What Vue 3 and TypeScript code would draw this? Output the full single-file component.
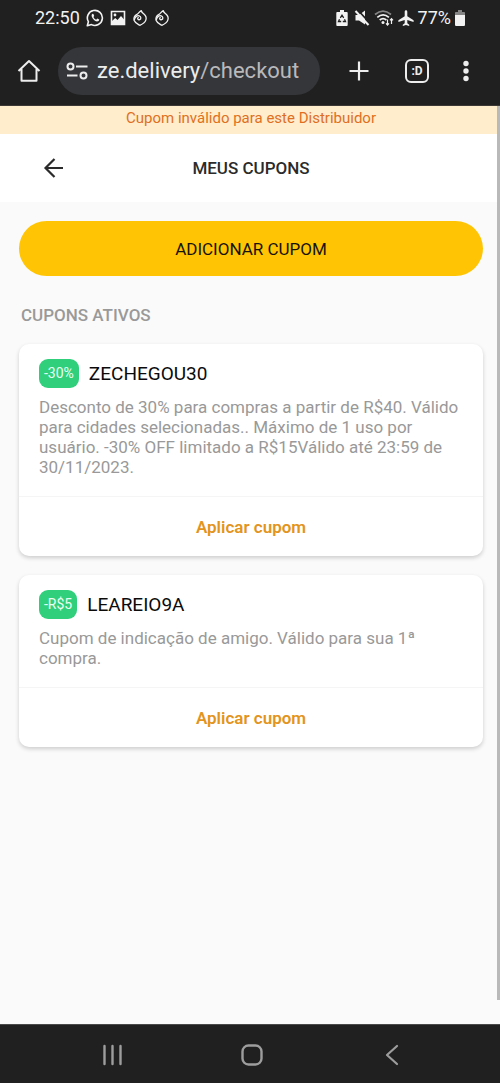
<script setup lang="ts">
interface Coupon {
  code: string
  badge: string
  description: string
}

const coupons: Coupon[] = [
  {
    code: 'ZECHEGOU30',
    badge: '-30%',
    description:
      'Desconto de 30% para compras a partir de R$40. Válido para cidades selecionadas.. Máximo de 1 uso por usuário. -30% OFF limitado a R$15Válido até 23:59 de 30/11/2023.',
  },
  {
    code: 'LEAREIO9A',
    badge: '-R$5',
    description: 'Cupom de indicação de amigo. Válido para sua 1ª compra.',
  },
]
</script>

<template>
  <div class="screen">
    <header class="chrome">
      <div class="status">
        <div class="status-group">
          <span class="status-text">22:50</span>
          <svg class="i18" viewBox="0 0 18 18" fill="none" stroke="#f2f2f2" aria-hidden="true">
            <path d="M1.3 16.7l1.1-4A7.5 7.5 0 1 1 5.5 15.600z" stroke-width="1.6" stroke-linejoin="round" />
            <path d="M6.600 4.800c-1.500.8-1.200 2.800.2 4.700 1.600 2.100 3.500 3.400 5.200 2.800.9-.3 1.300-1.100 1.200-1.700l-2-1-1 1.100c-1.200-.4-2.300-1.500-2.800-2.700l.8-1-.8-2.100z" fill="#f2f2f2" stroke="none" />
          </svg>
          <svg class="i16" viewBox="0 0 16 16" aria-hidden="true">
            <path d="M1.500 1.500h13v13h-13z" fill="#202020" stroke="#f2f2f2" stroke-width="1.600" />
            <circle cx="5" cy="5" r="1.400" fill="#f2f2f2" />
            <path d="M2 11l3.200-3 2.300 2 3.500-4 3.500 4v5H2z" fill="#f2f2f2" />
          </svg>
          <svg v-for="n in 2" :key="n" class="flame" viewBox="0 0 16 18" fill="none" stroke="#f2f2f2" stroke-width="1.300" stroke-linecap="round" stroke-linejoin="round" aria-hidden="true">
            <path d="M9.300 1.600C6.800 3 7 4.300 5 5.300 2.300 6.700 1.500 9 2.200 11.500c.9 2.600 3.400 3.600 5.600 4.800 2.500-1.100 5.300-2.800 6.100-5.400.8-2.500-.4-4.500-2-5.900C10.500 3.800 9.400 3.200 9.300 1.600z" />
            <path d="M2.300 10.800C3 7.500 5.300 6.300 7.200 6.800c2 .6 2.200 3.300.4 3.900-1.500.4-2.600-1.300-1.400-2.200" />
          </svg>
        </div>
        <div class="status-group right">
          <svg class="battery" viewBox="0 0 12 16" aria-hidden="true">
            <path d="M4 0h4v2h2.500c.8 0 1.200.4 1.200 1.200v11.600c0 .8-.4 1.200-1.200 1.200h-9C.7 16 .3 15.600.3 14.800V3.200C.3 2.400.7 2 1.500 2H4z" fill="#f2f2f2" />
            <path d="M4.300 7.800L6 5.200l1.700 2.600M8.500 9.300l1 2.200H6.800M3.500 9.300l-1 2.200h2.700" fill="none" stroke="#202020" stroke-width="1.300" />
          </svg>
          <svg class="i16" viewBox="0 0 16 16" aria-hidden="true">
            <path d="M1.500 5H5l6-4.500v14L5 10.500H1.500z" fill="#f2f2f2" />
            <path d="M4.200.5l12 13" stroke="#202020" stroke-width="1.800" />
            <path d="M1.500 1l13 14" stroke="#f2f2f2" stroke-width="2" />
          </svg>
          <svg class="wifi" viewBox="0 0 20 16" fill="none" stroke="#f2f2f2" aria-hidden="true">
            <path d="M1 4.500c5-4.300 11-4.300 16 0" stroke="#858585" stroke-width="1.700" />
            <path d="M3.300 7.300c3.600-3 8-3 11.600 0M5.700 10c2-1.700 4.600-1.700 6.700 0" stroke-width="1.700" />
            <circle cx="9" cy="12.500" r="1.500" fill="#f2f2f2" stroke="none" />
            <path d="M13.500 9.500v5.500M12 13.300l1.500 1.700 1.500-1.700M17.500 14V8.700M16 10.400l1.500-1.700 1.500 1.700" stroke-width="1.200" />
          </svg>
          <svg class="i16" viewBox="0 0 16 16" aria-hidden="true">
            <path d="M8 .3c.8 0 1.300.7 1.300 1.500v4.500l6.300 4v1.600L9.300 10v3.300l1.900 1.400v1.200L8 15l-3.200.9v-1.200l1.900-1.400V10L.4 11.900v-1.600l6.300-4V1.800C6.700 1 7.200.3 8 .3z" fill="#f2f2f2" />
          </svg>
          <span class="status-text">77%</span>
          <svg class="charge" viewBox="0 0 10 16" aria-hidden="true">
            <path d="M0 5V3c0-.7.4-1 1-1h2V0h4v2h2c.6 0 1 .3 1 1v2z" fill="#858585" />
            <path d="M0 5h10v9.500c0 1-.5 1.500-1.500 1.500h-7C.5 16 0 15.500 0 14.500z" fill="#f2f2f2" />
          </svg>
        </div>
      </div>

      <div class="toolbar">
        <button class="icon-btn" type="button" aria-label="Página inicial">
          <svg class="i24" viewBox="0 0 24 24" fill="none" stroke="#ededed" stroke-width="2" aria-hidden="true">
            <path d="M1.500 12L12 2l10.500 10M4.500 10v11.800h15V10" stroke-linejoin="round" />
          </svg>
        </button>
        <div class="address">
          <svg class="i24" viewBox="0 0 24 24" fill="none" stroke="#ededed" stroke-width="2" aria-hidden="true">
            <circle cx="5.500" cy="7.500" r="3" />
            <circle cx="18.500" cy="16.500" r="3" />
            <path d="M11 7.500h11.500M2 16.500h10.500" />
          </svg>
          <a class="url" href="#">ze.delivery<span>/checkout</span></a>
        </div>
        <div class="actions">
          <button class="icon-btn new-tab" type="button" aria-label="Nova guia">
            <svg class="i24" viewBox="0 0 24 24" stroke="#ededed" stroke-width="2.200" aria-hidden="true">
              <path d="M12 2.500v19M2.500 12h19" />
            </svg>
          </button>
          <button class="icon-btn tabs" type="button" aria-label="Guias abertas">:D</button>
          <button class="icon-btn" type="button" aria-label="Mais opções">
            <svg class="i24" viewBox="0 0 24 24" fill="#ededed" aria-hidden="true">
              <circle cx="12" cy="4.500" r="2.700" />
              <circle cx="12" cy="12" r="2.700" />
              <circle cx="12" cy="19.500" r="2.700" />
            </svg>
          </button>
        </div>
      </div>
    </header>

    <main class="page">
      <p class="notice" role="alert">Cupom inválido para este Distribuidor</p>
      <div class="title-bar">
        <button class="back" type="button" aria-label="Voltar">
          <svg class="i24" viewBox="0 0 24 24" fill="none" stroke="#2b2b2b" stroke-width="2.200" aria-hidden="true">
            <path d="M21 12H3.500M12.500 3l-9 9 9 9" />
          </svg>
        </button>
        <h1>MEUS CUPONS</h1>
      </div>

      <div class="content">
        <button class="add" type="button">ADICIONAR CUPOM</button>
        <h2>CUPONS ATIVOS</h2>
        <div class="list">
          <article v-for="coupon in coupons" :key="coupon.code" class="card">
            <div class="card-body">
              <div class="card-head">
                <span class="badge">{{ coupon.badge }}</span>
                <h3>{{ coupon.code }}</h3>
              </div>
              <p>{{ coupon.description }}</p>
            </div>
            <button class="apply" type="button">Aplicar cupom</button>
          </article>
        </div>
      </div>
      <div class="scroll-thumb"></div>
    </main>

    <nav class="system-nav" aria-label="Sistema">
      <button type="button" aria-label="Recentes">
        <svg class="i24" viewBox="0 0 24 24" stroke="#9d9d9d" stroke-width="2.400" stroke-linecap="round" aria-hidden="true">
          <path d="M4.500 3v18M12.500 3v18M20.500 3v18" />
        </svg>
      </button>
      <button type="button" aria-label="Início">
        <svg class="i24" viewBox="0 0 24 24" fill="none" stroke="#9d9d9d" stroke-width="2.400" aria-hidden="true">
          <rect x="2.500" y="2.500" width="19" height="19" rx="6" />
        </svg>
      </button>
      <button type="button" aria-label="Voltar">
        <svg class="i24" viewBox="0 0 24 24" fill="none" stroke="#9d9d9d" stroke-width="2.200" stroke-linecap="round" stroke-linejoin="round" aria-hidden="true">
          <path d="M17 3L7 12l10 9" />
        </svg>
      </button>
    </nav>
  </div>
</template>

<style>
body {
  margin: 0;
  background: #fafafa;
}
</style>

<style scoped>
.screen {
  display: flex;
  flex-direction: column;
  min-height: 100vh;
  font-family: Roboto, "Liberation Sans", sans-serif;
  background: #fafafa;
}
.screen * {
  box-sizing: border-box;
}
button {
  padding: 0;
  border: 0;
  background: none;
  font-family: inherit;
}
h1,
h2,
h3,
p {
  margin: 0;
}
svg {
  display: block;
  flex: none;
}
.i24 {
  width: 24px;
  height: 24px;
}
.i18 {
  width: 18px;
  height: 18px;
}
.i16 {
  width: 16px;
  height: 16px;
}
.flame {
  width: 16px;
  height: 18px;
}
.battery {
  width: 12px;
  height: 16px;
  margin-right: 2px;
}
.wifi {
  width: 20px;
  height: 16px;
}
.charge {
  width: 10px;
  height: 16px;
}
.chrome {
  background: #202020;
  border-bottom: 1px solid #3b3835;
}
.status {
  display: flex;
  justify-content: space-between;
  height: 36px;
  padding: 0 35px;
}
.status-group {
  display: flex;
  align-items: center;
  gap: 6px;
}
.status-group.right {
  gap: 4px;
}
.status-text {
  color: #f2f2f2;
  font-size: 18px;
  line-height: 36px;
}
.toolbar {
  display: flex;
  align-items: center;
  height: 69px;
  padding: 0 22px 0 17px;
}
.icon-btn {
  display: flex;
  flex: none;
  align-items: center;
  justify-content: center;
  width: 24px;
  height: 24px;
}
.address {
  display: flex;
  flex: 1;
  align-items: center;
  gap: 8px;
  height: 48px;
  margin-left: 17px;
  padding: 0 7px;
  border-radius: 24px;
  background: #35363a;
}
.url {
  color: #ececec;
  font-size: 22px;
  line-height: 48px;
  white-space: nowrap;
  text-decoration: none;
}
.url span {
  color: #b9b9bc;
}
.actions {
  display: flex;
  gap: 25px;
  margin-left: 27px;
}
.new-tab {
  margin-right: 9px;
}
.tabs {
  border: 2px solid #ededed;
  border-radius: 6px;
  color: #ededed;
  font-size: 12px;
  font-weight: 700;
}
.page {
  position: relative;
  flex: 1;
}
.notice {
  padding: 0 0 4px 2px;
  background: #ffedcb;
  color: #e0701f;
  font-size: 15px;
  line-height: 24px;
  text-align: center;
}
.title-bar {
  display: grid;
  grid-template-columns: 24px 1fr 24px;
  align-items: center;
  height: 68px;
  padding: 0 40px 0 42px;
  background: #fff;
}
.back {
  width: 24px;
  height: 24px;
}
h1 {
  color: #2b2b2b;
  font-size: 17px;
  font-weight: 500;
  text-align: center;
}
.content {
  padding: 19px 17px 24px 19px;
}
.add {
  display: block;
  width: 100%;
  height: 55px;
  border-radius: 28px;
  background: #ffc504;
  color: #17130a;
  font-size: 17px;
}
h2 {
  padding: 28px 2px 18px;
  color: #999;
  font-size: 17px;
  font-weight: 500;
  line-height: 22px;
}
.list {
  display: flex;
  flex-direction: column;
  gap: 19px;
}
.card {
  border-radius: 10px;
  background: #fff;
  box-shadow: 0 2px 4px rgba(0, 0, 0, 0.18);
}
.card-body {
  padding: 15px 20px 19px;
  border-bottom: 1px solid #f5f5f5;
}
.card-head {
  display: flex;
  align-items: center;
  gap: 10px;
}
.badge {
  padding: 0 5px;
  border-radius: 9px;
  background: #2fcf7c;
  color: #e9fff2;
  font-size: 14px;
  line-height: 29px;
}
h3 {
  color: #0b0b0b;
  font-size: 19px;
  font-weight: 400;
  line-height: 29px;
}
.card p {
  margin-top: 9px;
  color: #999;
  font-size: 17px;
  line-height: 20px;
}
.apply {
  display: block;
  width: 100%;
  height: 59px;
  color: #e3941c;
  font-size: 17px;
  font-weight: 600;
}
.scroll-thumb {
  position: absolute;
  top: 0;
  right: 0;
  bottom: 24px;
  width: 3px;
  background: #b9b9b9;
}
.system-nav {
  display: flex;
  justify-content: space-between;
  height: 59px;
  padding: 2px 96px 0 100px;
  border-top: 1px solid #4a4a4a;
  background: #202020;
}
</style>
